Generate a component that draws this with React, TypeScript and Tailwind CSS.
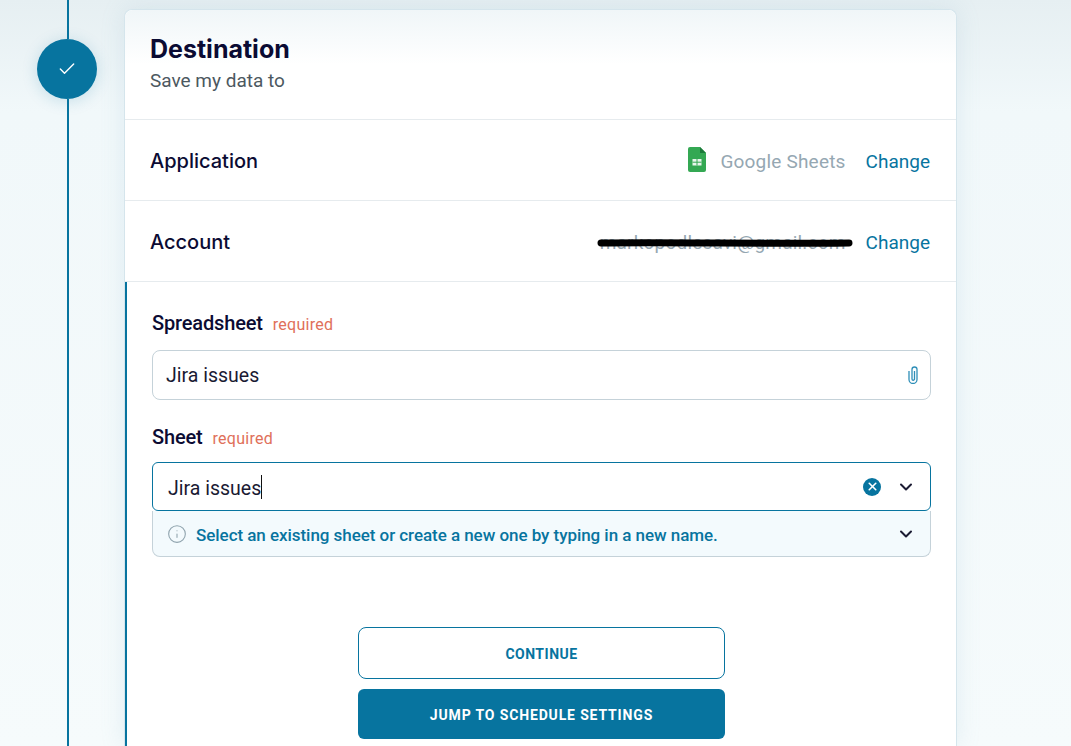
import React from 'react';
import { Check, ChevronDown, Info, X } from 'lucide-react';

function Row({ label, children }: { label: string; children: React.ReactNode }) {
  return (
    <div className="flex h-[81px] items-center justify-between border-b border-[#e6ebee] pl-[25px] pr-[26px]">
      <span className="pt-[1px] font-['Inter',sans-serif] text-[20px] font-medium text-[#0b0b33]">{label}</span>
      <div className="flex items-center pt-[5px]">
        {children}
        <a className="ml-[20px] text-[19px] text-[#07749f]">Change</a>
      </div>
    </div>
  );
}

function SheetsIcon() {
  return (
    <svg width="18" height="25" viewBox="0 0 18 25" className="mr-[14px] -mt-[6px]">
      <path d="M2 0h10l6 6v17a2 2 0 0 1-2 2H2a2 2 0 0 1-2-2V2a2 2 0 0 1 2-2z" fill="#34a853" />
      <path d="M12 0l6 6h-6z" fill="#1c7a3a" />
      <path d="M4.5 12h9v6.5h-9z" fill="#e8f5ec" />
      <path d="M4.5 15.2h9M9 12v6.5" stroke="#34a853" strokeWidth="1" />
    </svg>
  );
}

function Required() {
  return <span className="ml-[10px] text-[16px] font-normal tracking-[0.25px] text-[#e0705a]">required</span>;
}

export default function App() {
  return (
    <div className="flex h-[746px] w-[1071px] overflow-hidden bg-gradient-to-b from-[#e6eff2] via-[#f1f8fa] via-15% to-[#f6fbfc] font-['Roboto',sans-serif]">
      <div className="flex w-[124px] shrink-0 flex-col pl-[37px]">
        <div className="ml-[30px] h-[39px] w-[2px] bg-[#07749f]" />
        <div className="flex h-[60px] w-[60px] items-center justify-center rounded-full bg-[#07749f] shadow-[0_2px_16px_rgba(7,116,159,0.18)]">
          <Check size={20} color="#ffffff" strokeWidth={1.7} />
        </div>
        <div className="ml-[30px] w-[2px] flex-1 bg-[#07749f]" />
      </div>

      <div className="mt-[9px] w-[833px] shrink-0 self-start rounded-t-[8px] border-x border-t border-[#d5e5ec] bg-white shadow-[0_0_24px_rgba(120,170,190,0.16)]">
        <div className="h-[110px] rounded-t-[8px] border-b border-[#e6ebee] bg-gradient-to-b from-[#f0f6f8] to-white to-50% pl-[25px] pt-[24px]">
          <h1 className="font-['Inter',sans-serif] text-[25px] font-bold leading-[30px] text-[#0b0b33]">Destination</h1>
          <p className="mt-[5px] text-[19px] leading-[24px] text-[#4c5860]">Save my data to</p>
        </div>

        <Row label="Application">
          <SheetsIcon />
          <span className="text-[19px] tracking-[0.2px] text-[#95a7b2]">Google Sheets</span>
        </Row>
        <Row label="Account">
          <span className="relative text-[19px] tracking-[0.2px] text-[#95a7b2]">
            markopodlesavi@gmail.com
            <svg width="256" height="10" viewBox="0 0 256 10" className="absolute right-[-7px] top-[9px]">
              <path d="M4 5 C60 4 190 6 252 5" stroke="#000000" strokeWidth="7" strokeLinecap="round" fill="none" />
            </svg>
          </span>
        </Row>

        <div className="h-[465px] border-l-2 border-[#07749f] pl-[25px] pr-[25px] pt-[29px]">
          <div className="flex items-baseline text-[20px] leading-[24px] font-medium tracking-[-0.15px] text-[#0b0b33]">
            Spreadsheet
            <Required />
          </div>
          <div className="mt-[13px] flex h-[50px] items-center justify-between rounded-[8px] border border-[#c5d2d9] pl-[13px] pr-[12px] text-[19.5px] text-[#1a1a33]">
            <span className="pt-[2px]">Jira issues</span>
            <svg width="10" height="18" viewBox="0 0 10 18" fill="none" stroke="#2f8fb8" strokeWidth="1.3">
              <path d="M1 5V13.5a4 4 0 0 0 8 0V3.5a2.5 2.5 0 0 0-5 0V13a1.25 1.25 0 0 0 2.5 0V5" />
            </svg>
          </div>

          <div className="mt-[25px] flex items-baseline text-[20px] leading-[24px] font-medium tracking-[-0.15px] text-[#0b0b33]">
            Sheet
            <Required />
          </div>
          <div className="mt-[11px] flex h-[49px] items-center rounded-[6px] border border-[#07749f] pl-[15px] pr-[14px] text-[19.5px] text-[#1a1a33]">
            <span className="pt-[4px]">Jira issues</span>
            <span className="h-[24px] w-px bg-[#111111]" />
            <span className="ml-auto flex h-[18px] w-[18px] items-center justify-center rounded-full bg-[#07749f]">
              <X size={13} color="#ffffff" strokeWidth={3} />
            </span>
            <ChevronDown size={20} color="#1b1b33" strokeWidth={2.4} className="ml-[15px]" />
          </div>
          <div className="flex h-[46px] items-center rounded-b-[8px] border border-t-0 border-[#c5d2d9] bg-[#f3fafd] pl-[14px] pr-[14px]">
            <Info size={20} color="#8fa3ad" strokeWidth={1.3} />
            <span className="ml-[9px] pt-[4px] text-[17px] font-medium tracking-[-0.05px] text-[#07749f]">Select an existing sheet or create a new one by typing in a new name.</span>
            <ChevronDown size={20} color="#1b1b33" strokeWidth={2.4} className="ml-auto" />
          </div>

          <div className="mt-[70px] flex flex-col items-center gap-[10px]">
            <button className="h-[52px] w-[367px] rounded-[8px] border border-[#07749f] bg-white pt-[2px] text-[14px] font-bold tracking-[0.5px] text-[#07749f]">CONTINUE</button>
            <button className="h-[50px] w-[367px] rounded-[6px] bg-[#07749f] pt-[2px] text-[14px] font-bold tracking-[0.85px] text-white">JUMP TO SCHEDULE SETTINGS</button>
          </div>
        </div>
      </div>
      <div className="flex-1" />
    </div>
  );
}
